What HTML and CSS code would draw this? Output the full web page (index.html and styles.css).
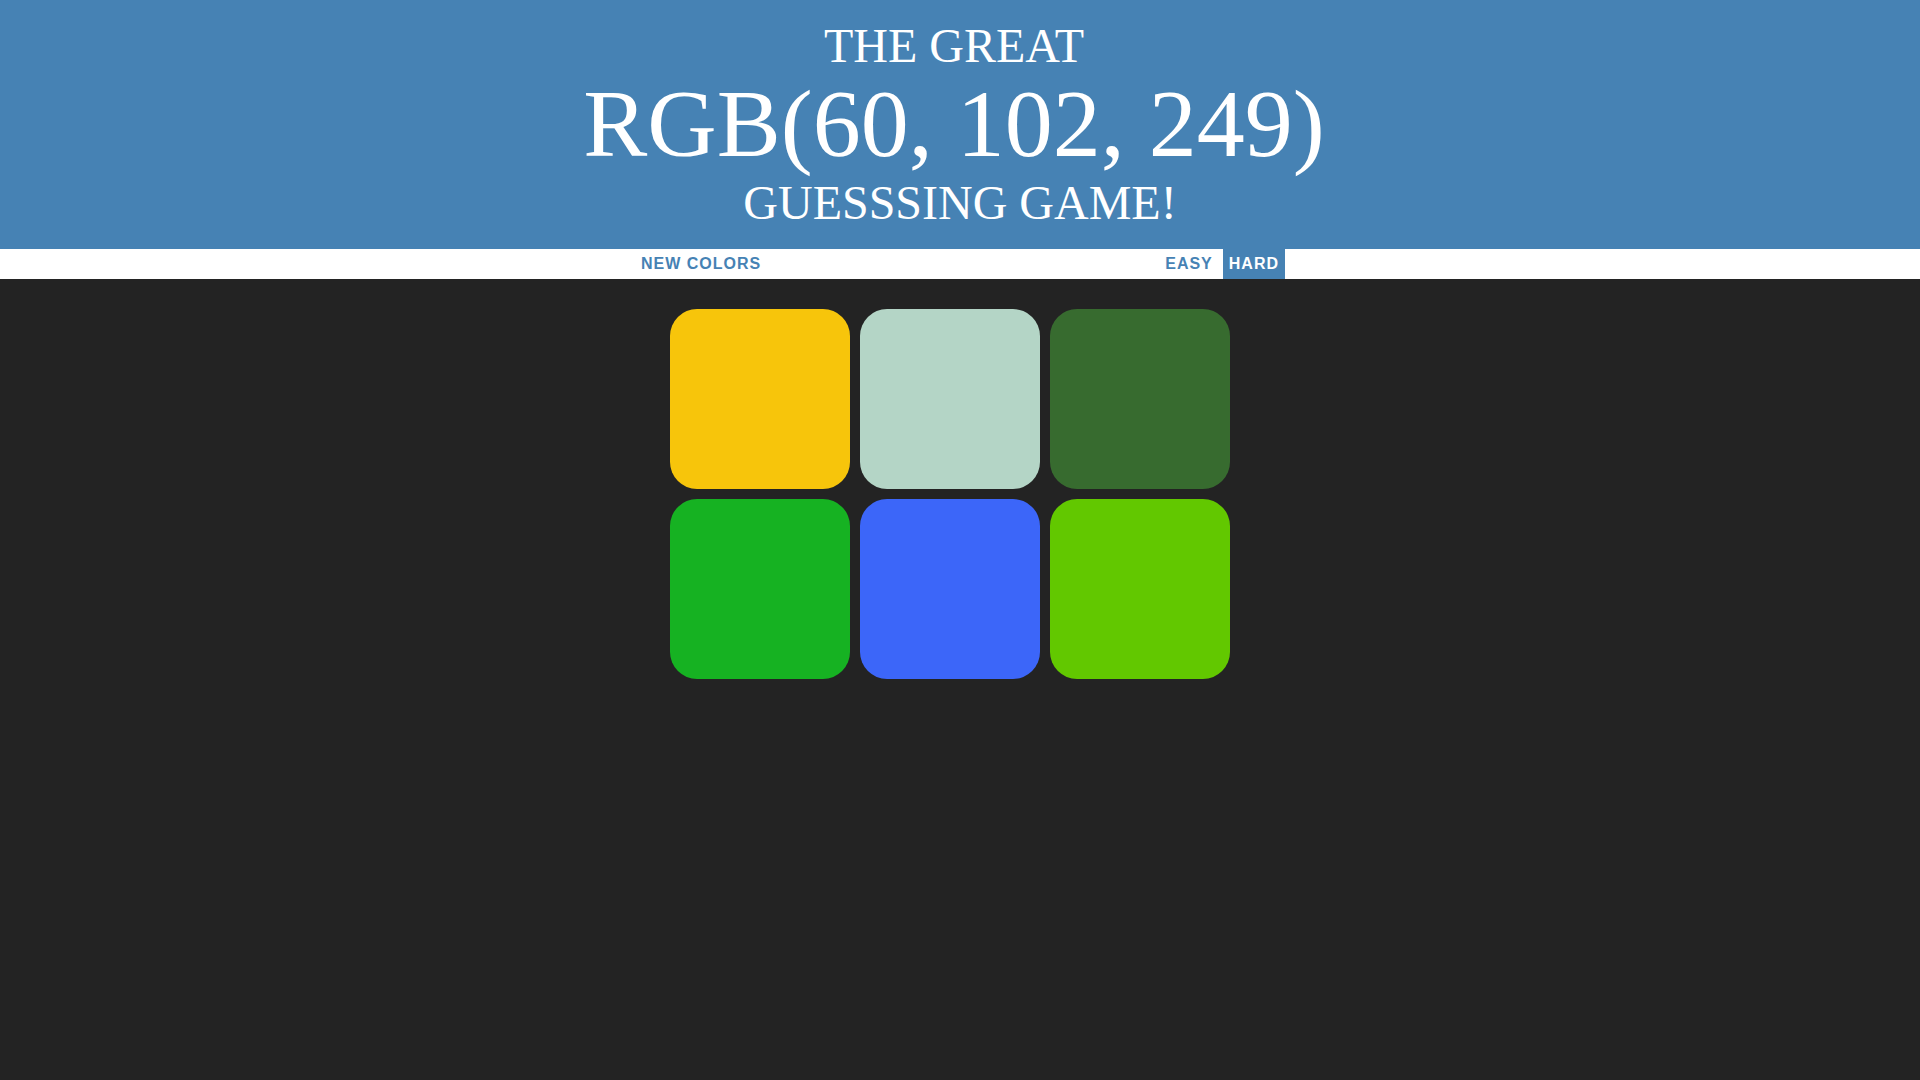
FILE: index.html
```html
<!DOCTYPE html>
<html>
<head>
<meta charset="utf-8">
<title>Color Game</title>
<link rel="stylesheet" href="styles.css">
</head>
<body>
<h1 class="title">The Great&nbsp;<br><span class="color-display">RGB(60, 102, 249)</span>&nbsp;<br>Guesssing Game!</h1>
<div class="stripe">
<button class="btn">New Colors</button>
<span class="message"></span>
<button class="btn mode">Easy</button>
<button class="btn mode selected">Hard</button>
</div>
<div class="container">
<div class="square" style="background: rgb(247, 197, 11);"></div>
<div class="square" style="background: rgb(180, 213, 198);"></div>
<div class="square" style="background: rgb(55, 107, 47);"></div>
<div class="square" style="background: rgb(22, 178, 34);"></div>
<div class="square" style="background: rgb(60, 102, 249);"></div>
<div class="square" style="background: rgb(98, 200, 0);"></div>
</div>
</body>
</html>
```
FILE: styles.css
```css
body {
  margin: 0;
  background: #232323;
  font-family: "Liberation Serif", "Times New Roman", serif;
  font-size: 16px;
}
.title {
  margin: 0;
  padding: 20px 0;
  background: steelblue;
  color: #fff;
  font-weight: normal;
  font-size: 48px;
  line-height: 1.088;
  text-align: center;
  text-transform: uppercase;
}
.color-display {
  font-size: 200%;
}
.stripe {
  height: 30px;
  background: #fff;
  text-align: center;
}
.btn {
  border: none;
  background: none;
  height: 100%;
  padding: 1px 6px;
  margin: 0;
  font-family: "Liberation Sans", Arial, sans-serif;
  font-size: 16px;
  font-weight: 700;
  letter-spacing: 1px;
  color: steelblue;
  text-transform: uppercase;
  vertical-align: top;
  cursor: pointer;
}
.btn.selected {
  background: steelblue;
  color: #fff;
}
.message {
  display: inline-block;
  width: 20%;
}
.container {
  width: 590px;
  margin: 30px auto 0;
  padding-left: 10px;
  display: grid;
  grid-template-columns: repeat(3, 180px);
  grid-auto-rows: 180px;
  gap: 10px;
}
.square {
  border-radius: 27px;
}
```
